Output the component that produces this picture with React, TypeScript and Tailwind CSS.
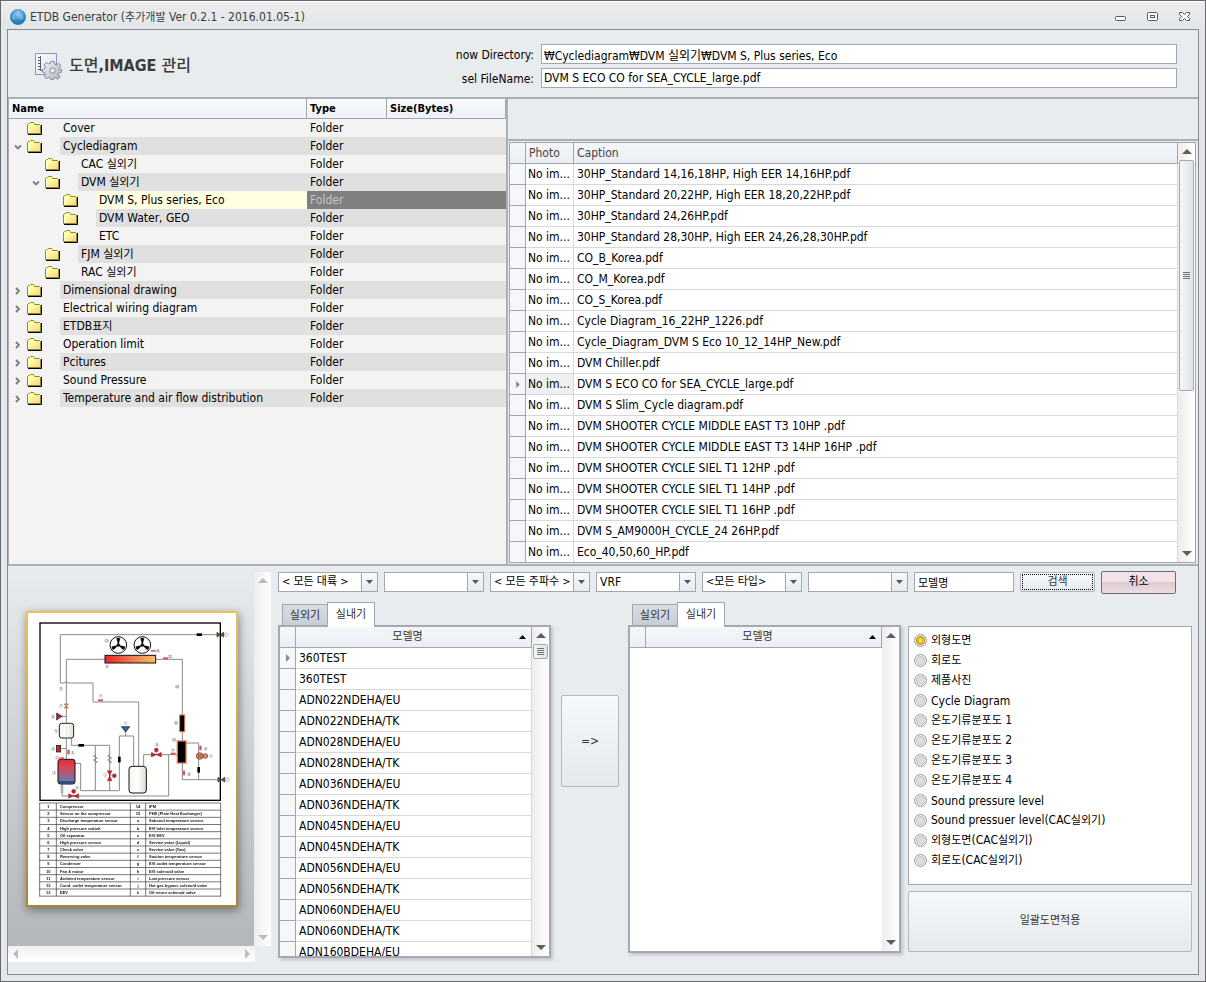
import React, { useState } from "react";

const HANGUL = /([\u3131-\uD79D]+)/;

/** Renders mixed Latin / Hangul text with the Hangul runs one step smaller. */
function Mixed({ text }: { text: string }) {
  return (
    <>
      {text.split(HANGUL).map((part, i) =>
        HANGUL.test(part) ? (
          <span key={i} className="text-[11px]">
            {part}
          </span>
        ) : (
          part
        )
      )}
    </>
  );
}

type Node = { name: string; level: number; state?: "open" | "closed"; selected?: boolean };

const NODES: Node[] = [
  { name: "Cover", level: 0 },
  { name: "Cyclediagram", level: 0, state: "open" },
  { name: "CAC 실외기", level: 1 },
  { name: "DVM 실외기", level: 1, state: "open" },
  { name: "DVM S, Plus series, Eco", level: 2, selected: true },
  { name: "DVM Water, GEO", level: 2 },
  { name: "ETC", level: 2 },
  { name: "FJM 실외기", level: 1 },
  { name: "RAC 실외기", level: 1 },
  { name: "Dimensional drawing", level: 0, state: "closed" },
  { name: "Electrical wiring diagram", level: 0, state: "closed" },
  { name: "ETDB표지", level: 0 },
  { name: "Operation limit", level: 0, state: "closed" },
  { name: "Pcitures", level: 0, state: "closed" },
  { name: "Sound Pressure", level: 0, state: "closed" },
  { name: "Temperature and air flow distribution", level: 0, state: "closed" },
];

const INDENT = ["pl-0", "pl-[18px]", "pl-9"];

const FILES = [
  "30HP_Standard 14,16,18HP, High EER 14,16HP.pdf",
  "30HP_Standard 20,22HP, High EER 18,20,22HP.pdf",
  "30HP_Standard 24,26HP.pdf",
  "30HP_Standard 28,30HP, High EER 24,26,28,30HP.pdf",
  "CO_B_Korea.pdf",
  "CO_M_Korea.pdf",
  "CO_S_Korea.pdf",
  "Cycle Diagram_16_22HP_1226.pdf",
  "Cycle_Diagram_DVM S Eco 10_12_14HP_New.pdf",
  "DVM Chiller.pdf",
  "DVM S ECO CO for SEA_CYCLE_large.pdf",
  "DVM S Slim_Cycle diagram.pdf",
  "DVM SHOOTER CYCLE MIDDLE EAST T3 10HP .pdf",
  "DVM SHOOTER CYCLE MIDDLE EAST T3 14HP 16HP .pdf",
  "DVM SHOOTER CYCLE SIEL T1 12HP .pdf",
  "DVM SHOOTER CYCLE SIEL T1 14HP .pdf",
  "DVM SHOOTER CYCLE SIEL T1 16HP .pdf",
  "DVM S_AM9000H_CYCLE_24 26HP.pdf",
  "Eco_40,50,60_HP.pdf",
];

const MODELS = [
  "360TEST",
  "360TEST",
  "ADN022NDEHA/EU",
  "ADN022NDEHA/TK",
  "ADN028NDEHA/EU",
  "ADN028NDEHA/TK",
  "ADN036NDEHA/EU",
  "ADN036NDEHA/TK",
  "ADN045NDEHA/EU",
  "ADN045NDEHA/TK",
  "ADN056NDEHA/EU",
  "ADN056NDEHA/TK",
  "ADN060NDEHA/EU",
  "ADN060NDEHA/TK",
  "ADN160BDEHA/EU",
];

const KINDS = [
  "외형도면",
  "회로도",
  "제품사진",
  "Cycle Diagram",
  "온도기류분포도 1",
  "온도기류분포도 2",
  "온도기류분포도 3",
  "온도기류분포도 4",
  "Sound pressure level",
  "Sound pressuer level(CAC실외기)",
  "외형도면(CAC실외기)",
  "회로도(CAC실외기)",
];

const LEGEND: [string, string, string, string][] = [
  ["1", "Compressor", "14", "IPM"],
  ["2", "Sensor on the compressor", "15", "PHE (Plate Heat Exchanger)"],
  ["3", "Discharge temperature sensor", "a", "Subcool temperature sensor"],
  ["4", "High pressure switch", "b", "EVI Inlet temperature sensor"],
  ["5", "Oil separator", "c", "EVI EEV"],
  ["6", "High pressure sensor", "d", "Service valve (Liquid)"],
  ["7", "Check valve", "e", "Service valve (Gas)"],
  ["8", "Reversing valve", "f", "Suction temperature sensor"],
  ["9", "Condenser", "g", "EVI outlet temperature sensor"],
  ["10", "Fan & motor", "h", "EVI solenoid valve"],
  ["11", "Ambient temperature sensor", "i", "Low pressure sensor"],
  ["12", "Cond. outlet temperature sensor", "j", "Hot gas bypass solenoid valve"],
  ["13", "EEV", "k", "Oil return solenoid valve"],
];

/* ---------- icons ---------- */

function FolderIcon() {
  return (
    <svg width="16" height="13" viewBox="0 0 16 13" aria-hidden="true">
      <defs>
        <linearGradient id="folderFill" x1="0" y1="0" x2="1" y2="1">
          <stop offset="0.3" stopColor="#ffff9c" />
          <stop offset="1" stopColor="#f6cf94" />
        </linearGradient>
      </defs>
      <path d="M14.500 3v9.500H1" fill="none" stroke="#000" />
      <path d="M.5 11.500v-9l1-1h1l1-1h3l1 1v1h5l1 1v8z" fill="url(#folderFill)" stroke="#8c8c1c" />
      <path d="M1.500 3.500h6M1.500 4v7" stroke="#ffffd8" fill="none" />
    </svg>
  );
}

function Expander({ state }: { state: "open" | "closed" }) {
  return (
    <svg width="8" height="8" viewBox="0 0 8 8" fill="none" stroke="#7c7c7c" strokeWidth="1.800" aria-hidden="true">
      {state === "open" ? <path d="M1 2.500l3 3 3-3" /> : <path d="M2 1l3 3-3 3" />}
    </svg>
  );
}

function Triangle({ dir, tone = "dark" }: { dir: "up" | "down" | "left" | "right"; tone?: "dark" | "light" }) {
  const d = {
    up: "M0 7l5-5 5 5z",
    down: "M0 3l5 5 5-5z",
    left: "M7 0L2 5l5 5z",
    right: "M3 0l5 5-5 5z",
  }[dir];
  const fill = { dark: "#5d5f61", light: "#b9bcbe" }[tone];
  return (
    <svg width="10" height="10" viewBox="0 0 10 10" fill={fill} aria-hidden="true">
      <path d={d} />
    </svg>
  );
}

function AppIcon() {
  return (
    <svg width="16" height="16" viewBox="0 0 16 16" aria-hidden="true">
      <defs>
        <radialGradient id="orb" cx="0.5" cy="0.25" r="0.8">
          <stop offset="0" stopColor="#9bcdf0" />
          <stop offset="0.5" stopColor="#3c93cf" />
          <stop offset="1" stopColor="#1b6aa8" />
        </radialGradient>
      </defs>
      <circle cx="8" cy="8" r="7.700" fill="url(#orb)" stroke="#2f7fb8" strokeWidth="0.500" />
      <path d="M3 6h2.500M3 6v4h2.500M3 8h2M6.500 6h3M8 6v4M10.500 6v4h1l1.500-2-1.500-2z" stroke="#a5d2ee" strokeWidth="0.700" fill="none" />
    </svg>
  );
}

function ReportIcon() {
  return (
    <svg width="28" height="28" viewBox="0 0 28 28" aria-hidden="true">
      <defs>
        <linearGradient id="sheet" x1="0" y1="0" x2="1" y2="1">
          <stop offset="0" stopColor="#ffffff" />
          <stop offset="1" stopColor="#d5dcea" />
        </linearGradient>
        <linearGradient id="gear" x1="0" y1="0" x2="1" y2="1">
          <stop offset="0" stopColor="#f4f6fa" />
          <stop offset="1" stopColor="#a9afbd" />
        </linearGradient>
      </defs>
      <path d="M1.500 1.500h21v21h-21z" fill="url(#sheet)" stroke="#8f96bd" />
      <path d="M6.500 4v14.500h6M4 5.500h2.500M4 8.500h2.500M4 11.500h2.500M4 14.500h2.500M4 17.500h2.500" stroke="#5a5f70" fill="none" />
      <g transform="translate(18.500 18.500)" stroke="#858b9b" fill="url(#gear)">
        <path d="M-1.600-9h3.200l.5 2.600 1.900.8 2.200-1.500 2.300 2.300-1.500 2.200.8 1.900L9-.9v2.600l-2.200.8-.8 1.700 1.500 2.200-2.300 2.300L3 7.200l-1.500.7L1 9.300h-2.600l-.7-1.800-1.800-.6-2.200 1.300-2-2.200 1.200-2-.8-1.800-2-.6V-1l2.200-.8.7-1.900L-8.400-5.600-6-8l2 1.300 1.900-.6z" />
        <circle r="2.600" fill="#eef1f5" />
      </g>
    </svg>
  );
}

/* ---------- drawing sheet preview ---------- */

function Valve({ x, y, vertical = false }: { x: number; y: number; vertical?: boolean }) {
  return (
    <g transform={`translate(${x} ${y})${vertical ? " rotate(90)" : ""}`} fill="#c8262b" stroke="#5d1012" strokeWidth="1">
      <path d="M-15-7L0 0l15-7V7L0 0l-15 7z" />
      <path d="M0 0v-10" />
      <circle cy="-14" r="6" />
    </g>
  );
}

function Fan({ x, y }: { x: number; y: number }) {
  return (
    <g transform={`translate(${x} ${y})`}>
      <circle r="25" fill="#fff" stroke="#111" strokeWidth="3" />
      {[0, 120, 240].map((a) => (
        <path key={a} d="M0 2L-6-20Q0-24 6-20z" transform={`rotate(${a})`} fill="#111" />
      ))}
      <circle r="5" fill="#111" />
    </g>
  );
}

function Port({ x, y }: { x: number; y: number }) {
  return (
    <g transform={`translate(${x} ${y})`}>
      <path d="M-10-7L0 0l10-7V7L0 0l-10 7z" fill="#7a5a3a" stroke="#2a1b10" strokeWidth="2" />
      <circle cx="18" r="5" fill="none" stroke="#777" strokeWidth="1.500" />
    </g>
  );
}

const MARKS: [number, number, string][] = [
  [320, 244, "10"], [321, 321, "9"], [474, 275, "11"], [510, 291, "12"], [183, 388, "8"],
  [303, 410, "f"], [531, 382, "14"], [183, 440, "7"], [159, 472, "6"], [168, 515, "5"],
  [377, 490, "i"], [528, 491, "14"], [159, 569, "4"], [218, 580, "3"], [171, 594, "2"],
  [522, 542, "15"], [471, 555, "h"], [519, 572, "a"], [617, 567, "b"], [633, 590, "c"],
  [162, 640, "1"], [315, 645, "j"], [232, 684, "k"], [567, 643, "g"],
];

function SheetPreview() {
  return (
    <svg
      className="h-auto w-[212px] shrink-0 drop-shadow-[1px_3px_5px_rgba(60,60,60,0.6)]"
      viewBox="78 151 636 888"
      role="img"
      aria-label="DVM S ECO CO for SEA_CYCLE_large.pdf"
    >
      <defs>
        <linearGradient id="gold" x1="0" y1="0" x2="0" y2="1">
          <stop offset="0" stopColor="#ecc15a" />
          <stop offset="1" stopColor="#a9872c" />
        </linearGradient>
        <linearGradient id="coil">
          <stop offset="0" stopColor="#e8282c" />
          <stop offset="1" stopColor="#f6c067" />
        </linearGradient>
        <linearGradient id="comp" x1="0" y1="0" x2="0" y2="1">
          <stop offset="0" stopColor="#e52a33" />
          <stop offset="0.350" stopColor="#d14a5a" />
          <stop offset="1" stopColor="#5b7fc0" />
        </linearGradient>
        <linearGradient id="tank">
          <stop offset="0" stopColor="#f4f4ee" />
          <stop offset="0.500" stopColor="#ffffff" />
          <stop offset="1" stopColor="#dcdcd2" />
        </linearGradient>
      </defs>
      <rect x="81" y="154" width="630" height="882" fill="#fff" stroke="url(#gold)" strokeWidth="6" />
      <rect x="120" y="187" width="541" height="532" fill="none" stroke="#000" strokeWidth="4" />

      <g fill="none" stroke="#8a8a8a" strokeWidth="3">
        <path d="M661 222H181v145h11q7-8 14 0h73v57h137v192" />
        <path d="M199 596V296h116M466 296h81v361h117" />
        <path d="M214 532v22h115v136M286 554v136M225 608h17v82h116V526h43v90M377 526v-14" />
        <path d="M186 670v36h320V582M431 616v-34h100M558 547h38v110M182 467h17M182 564h17" />
        <path d="M286 582l-6 4 12 6-12 6 12 6-6 4M329 582l-6 4 12 6-12 6 12 6-6 4" stroke="#666" strokeWidth="2" />
        <path d="M181 676h10M181 682h10M181 688h10M181 694h10" strokeWidth="2" />
      </g>

      <Fan x={355} y={253} />
      <Fan x={427} y={253} />
      <rect x="315" y="284" width="152" height="23" fill="url(#coil)" stroke="#111" strokeWidth="3" />
      <rect x="178" y="488" width="43" height="44" rx="7" fill="url(#tank)" stroke="#222" strokeWidth="3" />
      <path d="M199 488v44" stroke="#d0d0d0" strokeWidth="2" />
      <rect x="174" y="596" width="51" height="74" rx="7" fill="url(#comp)" stroke="#111" strokeWidth="3" />
      <path d="M176 664h47" stroke="#1d4d5c" strokeWidth="5" />
      <rect x="387" y="617" width="52" height="80" rx="9" fill="url(#tank)" stroke="#111" strokeWidth="3" />
      <rect x="539" y="463" width="15" height="50" fill="#000" stroke="#d9764c" strokeWidth="3" />
      <rect x="532" y="541" width="26" height="66" fill="#000" stroke="#d9764c" strokeWidth="4" />

      <g fill="#000">
        <rect x="590" y="218" width="16" height="8" />
        <rect x="235" y="550" width="17" height="8" />
        <rect x="354" y="588" width="8" height="17" />
        <rect x="592" y="619" width="8" height="17" />
      </g>
      <g fill="#dc5358">
        <rect x="453" y="268" width="14" height="5" />
        <rect x="489" y="290" width="15" height="6" />
        <rect x="294" y="416" width="15" height="6" />
        <rect x="202" y="567" width="7" height="14" />
        <rect x="178" y="590" width="14" height="6" />
        <rect x="512" y="576" width="15" height="6" />
        <rect x="598" y="555" width="7" height="14" />
        <rect x="548" y="630" width="7" height="14" />
      </g>
      <path d="M192 430h14l-7 6 7 6h-14l7-6z" fill="#d9a35b" stroke="#7b5a2c" strokeWidth="1.500" />
      <path d="M170 457l16 10-16 11z" fill="#c8262b" stroke="#111" strokeWidth="2" />
      <rect x="169" y="554" width="13" height="20" fill="#c8262b" stroke="#111" strokeWidth="2" />
      <path d="M364 498h25l-12 16z" fill="#3465a8" stroke="#111" strokeWidth="2" />
      <Valve x={469} y={582} />
      <Valve x={221} y={706} />
      <Valve x={329} y={645} vertical />
      <g fill="#d4876a" stroke="#7a2f1e" strokeWidth="2">
        <circle cx="599" cy="586" r="10" />
        <circle cx="616" cy="586" r="7" />
        <path d="M592 579l14 14M606 579l-14 14" />
      </g>
      <Port x={661} y={222} />
      <Port x={664} y={657} />

      <g fontSize="9" textAnchor="middle" fill="#444" className="font-['Liberation_Sans',sans-serif]">
        {MARKS.map(([x, y, t], i) => (
          <g key={i}>
            <circle cx={x} cy={y - 3} r="5" fill="none" stroke="#999" />
            <text x={x} y={y}>
              {t}
            </text>
          </g>
        ))}
      </g>

      <g stroke="#333" strokeWidth="2" fill="none">
        <path d="M119 727v280M169 727v280M391 727v280M437 727v280M662 727v280" />
        {Array.from({ length: 14 }, (_, i) => (
          <path key={i} d={`M118 ${727 + i * 21.5}H663`} />
        ))}
      </g>
      <g fontSize="12" fontWeight="bold" fill="#111" className="font-['Liberation_Sans',sans-serif]">
        {LEGEND.map(([n, a, m, b], i) => (
          <g key={n} transform={`translate(0 ${742 + i * 21.5})`}>
            <text x="145" textAnchor="middle">{n}</text>
            <text x="180">{a}</text>
            <text x="414" textAnchor="middle">{m}</text>
            <text x="447">{b}</text>
          </g>
        ))}
      </g>
    </svg>
  );
}

/* ---------- controls ---------- */

function ScrollButton({ dir, tone }: { dir: "up" | "down" | "left" | "right"; tone?: "dark" | "light" }) {
  return (
    <button type="button" aria-label={`Scroll ${dir}`} className="flex size-4 shrink-0 items-center justify-center">
      <Triangle dir={dir} tone={tone} />
    </button>
  );
}

function VerticalBar({ thumb, tone = "dark" }: { thumb?: "long" | "short"; tone?: "dark" | "light" }) {
  return (
    <div className="flex w-[17px] shrink-0 flex-col items-center bg-gradient-to-r from-[#ededee] to-white py-px">
      <ScrollButton dir="up" tone={tone} />
      <div className="flex w-full flex-1 flex-col items-center">
        {thumb && (
          <div
            className={`flex w-[15px] flex-col items-center justify-center gap-px rounded-xs border border-[#a5a9ad] bg-gradient-to-r from-[#f6f7f8] to-[#dfe2e5] ${
              thumb === "long" ? "h-[60%]" : "h-[15px]"
            }`}
          >
            {[0, 1, 2, 3].map((i) => (
              <span key={i} className="h-px w-[7px] bg-[#6f7376]" />
            ))}
          </div>
        )}
      </div>
      <ScrollButton dir="down" tone={tone} />
    </div>
  );
}

function Combo({ label, value }: { label: string; value: string }) {
  const size = HANGUL.test(value) ? "text-[11px]" : "text-xs";
  return (
    <div className="relative h-5 w-[100px]">
      <select
        aria-label={label}
        className={`h-full w-full appearance-none border border-[#a2a6ae] bg-white pl-[3px] text-black ${size}`}
      >
        <option>{value}</option>
      </select>
      <span className="pointer-events-none absolute inset-y-px right-px flex w-4 items-center justify-center border-l border-[#a2a6ae] bg-gradient-to-b from-[#f8fafb] to-[#e7ebee]">
        <svg width="7" height="4" viewBox="0 0 7 4" fill="#55585b" aria-hidden="true">
          <path d="M0 0h7L3.500 4z" />
        </svg>
      </span>
    </div>
  );
}

const HEAD = "bg-gradient-to-b from-[#f4f7fa] to-[#eaeef3] font-normal";

function ModelPanel({ rows }: { rows: string[] }) {
  return (
    <div className="flex min-h-0 min-w-0 flex-1 flex-col">
      <div role="tablist" className="flex h-[23px] items-end pl-1 text-[#333]">
        <button
          type="button"
          role="tab"
          aria-selected="false"
          className="h-[21px] w-[46px] border border-b-0 border-[#a2a6ae] bg-gradient-to-b from-[#d9dce1] to-[#c9ced5] pt-0.5 text-[11px]"
        >
          실외기
        </button>
        <button
          type="button"
          role="tab"
          aria-selected="true"
          className="z-10 -mb-0.5 -ml-px h-[25px] w-12 border border-b-0 border-[#a2a6ae] bg-white text-[11px]"
        >
          실내기
        </button>
      </div>
      <div className="flex min-h-0 flex-1 border-2 border-[#a5a9b3] bg-white shadow-[2px_2px_3px_rgba(120,125,135,0.35)]">
        <div className="min-w-0 flex-1 overflow-hidden">
          <table className="w-full table-fixed border-separate border-spacing-0">
            <colgroup>
              <col className="w-4" />
              <col />
            </colgroup>
            <thead>
              <tr className="h-[21px]">
                <th className={`border-b border-r border-[#a2a6ae] p-0 ${HEAD}`} />
                <th className={`border-b border-r border-[#a2a6ae] p-0 ${HEAD}`}>
                  <div className="flex items-center pr-[5px] text-[#333]">
                    <span className="flex-1 text-[11px] leading-4">모델명</span>
                    <svg width="7" height="4" viewBox="0 0 7 4" aria-hidden="true">
                      <path d="M0 4h7L3.500 0z" />
                    </svg>
                  </div>
                </th>
              </tr>
            </thead>
            <tbody>
              {rows.map((m, i) => (
                <tr key={i} className="h-[21px]">
                  <td className="border-b border-r border-[#a2a6ae] bg-[#f5f7fa] p-0">
                    {i === 0 && (
                      <span className="flex justify-center">
                        <svg width="4" height="8" viewBox="0 0 4 8" fill="#85888b" aria-hidden="true">
                          <path d="M0 0l4 4-4 4z" />
                        </svg>
                      </span>
                    )}
                  </td>
                  <td className="border-b border-r border-[#d6d8dc] p-0 pl-[3px] pt-px leading-[19px]">{m}</td>
                </tr>
              ))}
            </tbody>
          </table>
        </div>
        <VerticalBar thumb={rows.length > 0 ? "short" : undefined} />
      </div>
    </div>
  );
}

/* ---------- page ---------- */

export default function App() {
  const [kind, setKind] = useState(0);

  return (
    <div className="flex h-screen flex-col overflow-hidden border border-[#67686c] bg-[#e3e7ea] font-['DejaVu_Sans_Condensed','Noto_Sans_CJK_KR',sans-serif] text-xs text-black">
      <header className="flex h-7 shrink-0 items-center border-t border-white bg-gradient-to-b from-[#ececee] to-[#e2e6e8] pl-[9px] pr-3.5 pt-[3px] text-[#3c3c3c]">
        <AppIcon />
        <span className="flex-1 pl-1">
          <Mixed text="ETDB Generator (추가개발 Ver 0.2.1 - 2016.01.05-1)" />
        </span>
        <div className="flex items-center gap-5">
          <button type="button" aria-label="Minimize">
            <svg width="12" height="12" viewBox="0 0 12 12" fill="#fff" stroke="#56595c" aria-hidden="true">
              <rect x="0.500" y="5.500" width="10" height="4" rx="1" />
            </svg>
          </button>
          <button type="button" aria-label="Restore">
            <svg width="12" height="12" viewBox="0 0 12 12" fill="#fff" stroke="#56595c" aria-hidden="true">
              <rect x="0.500" y="1.500" width="10" height="8" rx="1" />
              <rect x="3.500" y="4.500" width="4" height="2" />
            </svg>
          </button>
          <button type="button" aria-label="Close">
            <svg width="12" height="12" viewBox="0 0 12 12" fill="#fff" stroke="#56595c" aria-hidden="true">
              <path d="M.5 1.500h3l2 2 2-2h3v2L8.300 5.500l2.200 2.200v1.800h-3l-2-2-2 2h-3V7.700l2.200-2.200L.5 3.500z" />
            </svg>
          </button>
        </div>
      </header>

      <main className="mx-1.5 mb-1.5 flex min-h-0 flex-1 flex-col border border-[#868b91] bg-[#e8ecef]">
        <section className="flex h-[69px] shrink-0 border-b-2 border-[#abb0b7] pr-[21px]">
          <h1 className="flex w-[445px] shrink-0 items-center gap-[7px] pl-[26px] pt-1 text-base font-bold text-[#3b3b3b]">
            <ReportIcon />
            <span>
              <span className="font-medium">도면</span>,IMAGE <span className="font-medium">관리</span>
            </span>
          </h1>
          <div className="grid min-w-0 flex-1 grid-cols-[88px_minmax(0,1fr)] content-start gap-y-1 pt-3.5">
            <label htmlFor="dir" className="pr-[7px] text-right leading-[22px]">now Directory:</label>
            <input
              id="dir"
              readOnly
              className="h-5 border border-[#a2a6ae] bg-white px-0.5"
              value="₩Cyclediagram₩DVM 실외기₩DVM S, Plus series, Eco"
            />
            <label htmlFor="file" className="-mt-0.5 pr-[7px] text-right leading-[22px]">sel FileName:</label>
            <input
              id="file"
              readOnly
              className="-mt-0.5 h-5 border border-[#a2a6ae] bg-white px-0.5"
              value="DVM S ECO CO for SEA_CYCLE_large.pdf"
            />
          </div>
        </section>

        <div className="grid min-h-0 flex-1 grid-rows-[minmax(0,467fr)_minmax(0,408fr)]">
          <div className="grid grid-cols-[minmax(0,498fr)_minmax(0,692fr)] border-b-2 border-[#abb0b7]">
            <section className="min-h-0 overflow-hidden border-l border-[#abb0b7] bg-[#f3f3f3]">
              <table className="w-full table-fixed border-separate border-spacing-0">
                <colgroup>
                  <col />
                  <col className="w-20" />
                  <col className="w-[119px]" />
                </colgroup>
                <thead>
                  <tr className="h-5 text-left">
                    {["Name", "Type", "Size(Bytes)"].map((h) => (
                      <th
                        key={h}
                        className="border-b border-r border-[#a2a6ae] bg-gradient-to-b from-[#f9fbfc] to-[#eef2f6] p-0 pl-[3px] text-[11px] font-bold leading-4"
                      >
                        {h}
                      </th>
                    ))}
                  </tr>
                </thead>
                <tbody>
                  {NODES.map((n, i) => {
                    const stripe = i % 2 === 1 ? "bg-[#e0e0e0]" : "";
                    const rest = n.selected ? "bg-[#808080] text-[#c4c4c4]" : stripe;
                    return (
                      <tr key={n.name} className="h-[18px] leading-[18px]">
                        <td className="p-0">
                          <div className={`flex ${INDENT[n.level]}`}>
                            <span className="flex w-[18px] shrink-0 items-center justify-center pt-0.5">
                              {n.state && <Expander state={n.state} />}
                            </span>
                            <span className="flex w-[33px] shrink-0 items-center">
                              <FolderIcon />
                            </span>
                            <span className={`h-[18px] flex-1 truncate pl-[3px] ${n.selected ? "bg-[#ffffe1]" : stripe}`}>
                              <Mixed text={n.name} />
                            </span>
                          </div>
                        </td>
                        <td className={`p-0 pl-[3px] ${rest}`}>Folder</td>
                        <td className={`p-0 ${rest}`} />
                      </tr>
                    );
                  })}
                </tbody>
              </table>
            </section>

            <section className="flex min-h-0 flex-col border-l-2 border-[#abb0b7]">
              <div className="h-[42px] shrink-0 border-b-2 border-[#abb0b7]" />
              <div className="mb-px ml-px mr-0.5 mt-px flex min-h-0 flex-1 border border-[#a2a6ae] bg-white">
                <div className="min-w-0 flex-1 overflow-hidden">
                  <table className="w-full table-fixed border-separate border-spacing-0">
                    <colgroup>
                      <col className="w-4" />
                      <col className="w-12" />
                      <col />
                    </colgroup>
                    <thead>
                      <tr className="h-[21px] text-left text-[#444]">
                        {["", "Photo", "Caption"].map((h) => (
                          <th key={h} className={`border-b border-r border-[#a2a6ae] p-0 pl-[3px] leading-5 ${HEAD}`}>
                            {h}
                          </th>
                        ))}
                      </tr>
                    </thead>
                    <tbody>
                      {FILES.map((f, i) => {
                        const current = i === 10;
                        return (
                          <tr key={f} className="h-[21px] leading-5">
                            <td className="border-b border-r border-[#a2a6ae] bg-[#f5f7fa] p-0">
                              {current && (
                                <span className="flex justify-center">
                                  <svg width="4" height="7" viewBox="0 0 4 8" fill="#85888b" aria-hidden="true">
                                    <path d="M0 0l4 4-4 4z" />
                                  </svg>
                                </span>
                              )}
                            </td>
                            <td
                              className={`whitespace-nowrap border-b border-r border-[#d6d8dc] p-0 pl-0.5 ${
                                current ? "bg-[#eef0f2]" : ""
                              }`}
                            >
                              No im...
                            </td>
                            <td className="truncate border-b border-r border-[#d6d8dc] p-0 pl-[3px]">{f}</td>
                          </tr>
                        );
                      })}
                    </tbody>
                  </table>
                </div>
                <VerticalBar thumb="long" />
              </div>
            </section>
          </div>

          <div className="flex min-h-0">
            <aside className="flex w-[263px] shrink-0 flex-col pb-3">
              <div className="flex min-h-0 flex-1">
                <div className="flex min-w-0 flex-1 items-center justify-center overflow-hidden bg-gradient-to-b from-[#e8ecef] via-[#cbd0d4] to-[#b3b7b9] pl-0.5 pt-1.5">
                  <SheetPreview />
                </div>
                <div className="flex pt-1.5">
                  <VerticalBar tone="light" />
                </div>
              </div>
              <div className="mr-4 flex h-4 shrink-0 justify-between bg-gradient-to-b from-[#f0f1f2] to-white">
                <ScrollButton dir="left" tone="light" />
                <ScrollButton dir="right" tone="light" />
              </div>
            </aside>

            <section className="flex min-w-0 flex-1 flex-col pb-4 pl-[7px] pr-1.5 pt-[5px]">
              <form className="flex h-[22px] shrink-0 items-center gap-1.5" onSubmit={(e) => e.preventDefault()}>
                <Combo label="대륙" value="< 모든 대륙 >" />
                <Combo label="국가" value="" />
                <Combo label="주파수" value="< 모든 주파수 >" />
                <Combo label="제품군" value="VRF" />
                <Combo label="타입" value="<모든 타입>" />
                <Combo label="용량" value="" />
                <input
                  aria-label="모델명"
                  defaultValue="모델명"
                  className="h-5 w-[100px] border border-[#a2a6ae] bg-white px-[3px] text-[11px]"
                />
                <button
                  type="submit"
                  className="h-5 w-[75px] rounded-xs border border-[#b3b8bd] bg-gradient-to-b from-[#fafbfc] to-[#e4e9ed] p-px text-[11px] text-[#333]"
                >
                  <span className="flex h-full items-center justify-center border border-dotted border-black">검색</span>
                </button>
                <button
                  type="button"
                  className="h-[23px] w-[75px] rounded-xs border border-[#776b72] bg-gradient-to-b from-[#f1e3e8] from-45% via-[#dccbd2] via-50% to-[#ecdce1] text-[11px]"
                >
                  취소
                </button>
              </form>

              <div className="mt-[9px] grid min-h-0 flex-1 grid-cols-[minmax(0,273fr)_77px_minmax(0,273fr)_minmax(0,291fr)] grid-rows-[minmax(0,1fr)]">
                <ModelPanel rows={MODELS} />
                <button
                  type="button"
                  className="ml-2.5 mr-[9px] mt-[93px] h-[92px] rounded-xs border border-[#b3b8bd] bg-gradient-to-b from-[#f6f9fb] to-[#e5e9ec] text-[#333]"
                >
                  =&gt;
                </button>
                <div className="flex min-h-0 pb-[5px]">
                  <ModelPanel rows={[]} />
                </div>
                <div className="flex min-h-0 flex-col gap-1.5 pb-1.5 pl-[7px] pt-6">
                  <fieldset className="min-h-0 flex-1 overflow-hidden border border-[#a2a6ae] bg-white pl-[5px] pt-[3px]">
                    {KINDS.map((k, i) => (
                      <label key={k} className="flex h-5 items-center gap-1">
                        <input
                          type="radio"
                          name="kind"
                          checked={kind === i}
                          onChange={() => setKind(i)}
                          className="size-[13px] appearance-none rounded-full border border-[#96999c] bg-[radial-gradient(circle,#dcdee0_0_3px,#c3c6c8_4px,#f2f3f4_5px)] checked:bg-[radial-gradient(circle,#ffdf4e_0_1px,#eeb211_3px,#b98d2a_4px,#f8f6ef_5px)]"
                        />
                        <span className="pt-px leading-5">
                          <Mixed text={k} />
                        </span>
                      </label>
                    ))}
                  </fieldset>
                  <button
                    type="button"
                    className="h-[61px] shrink-0 rounded-xs border border-[#b3b8bd] bg-gradient-to-b from-[#f6f9fb] to-[#e5e9ec] text-[11px] text-[#333]"
                  >
                    일괄도면적용
                  </button>
                </div>
              </div>
            </section>
          </div>
        </div>
      </main>
    </div>
  );
}
